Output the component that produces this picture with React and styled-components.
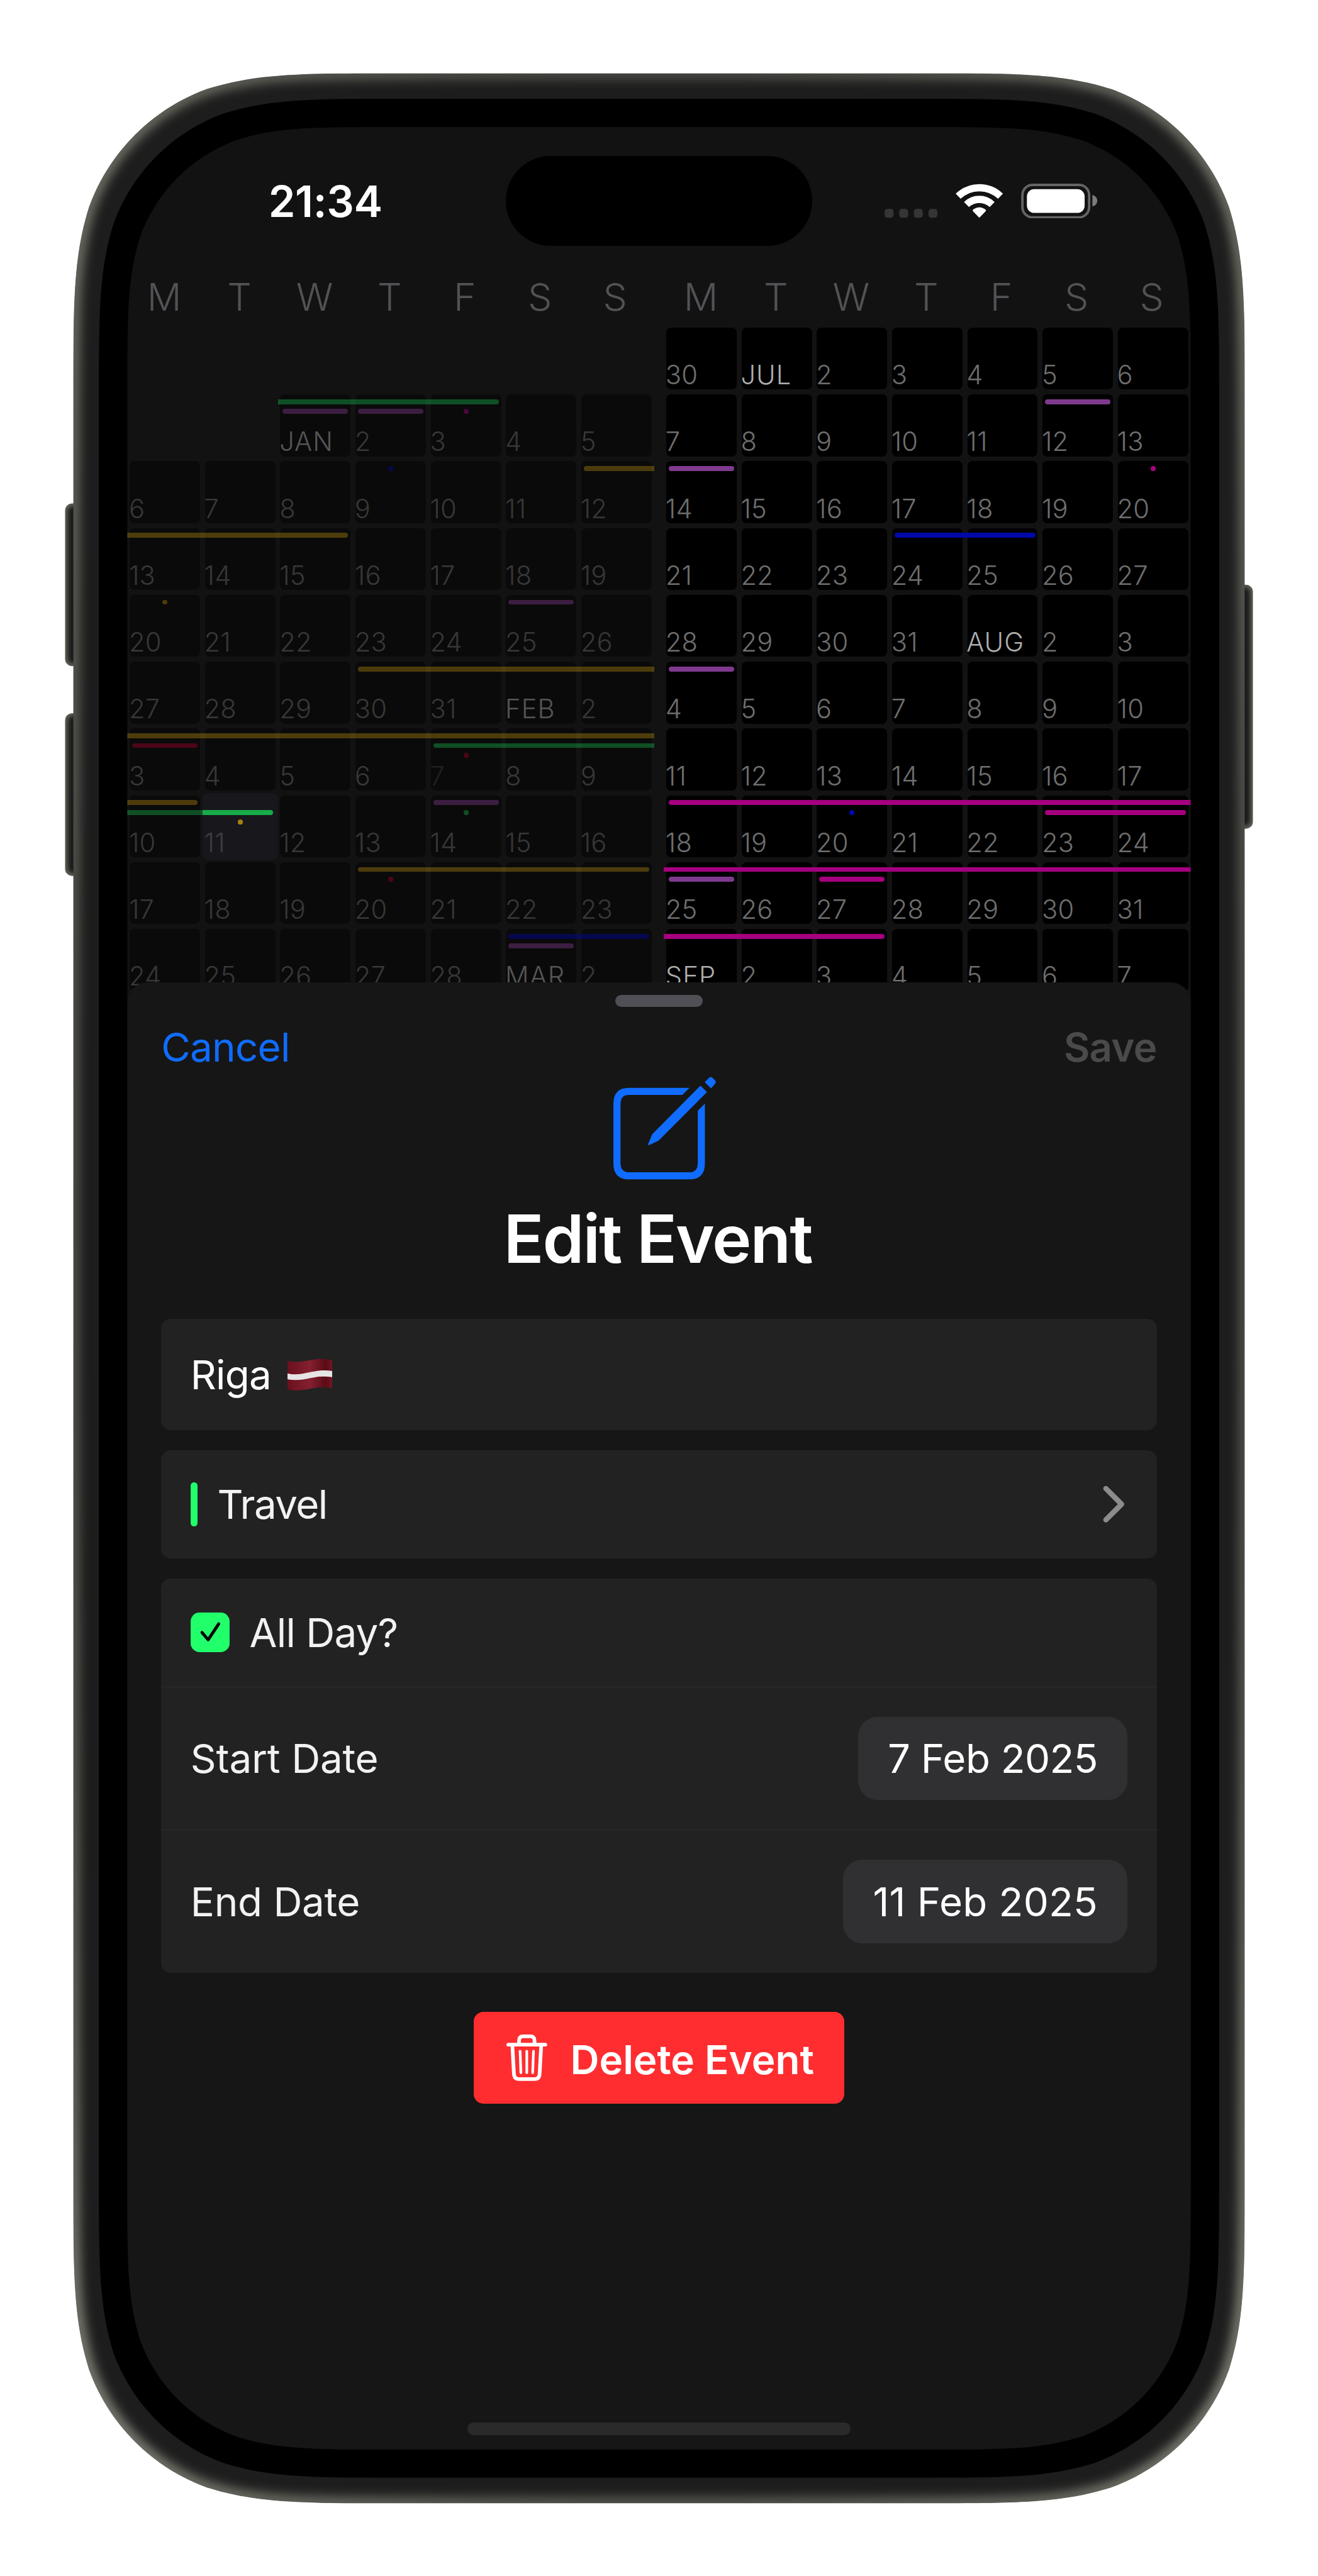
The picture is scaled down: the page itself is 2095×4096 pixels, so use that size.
import React from "react";
import styled, { createGlobalStyle, css } from "styled-components";

/* One rem is 100 design units; the whole design is 32.4rem wide. */
const UNIT = 2095 / 32.4;

const GlobalStyle = createGlobalStyle`
  html {
    font-size: ${UNIT}px;
    background: #ffffff;
  }
  body {
    margin: 0;
    overflow: hidden;
    font-family: Inter, "Liberation Sans", sans-serif;
    -webkit-font-smoothing: antialiased;
  }
  *, *::before, *::after {
    box-sizing: border-box;
  }
`;

/* Rounded rectangle with continuous ("squircle") corners. */
function squircle(x, y, w, h, r) {
  const R = x + w;
  const B = y + h;
  const a = 1.528665 * r;
  const b = 1.088493 * r;
  const c = 0.868407 * r;
  const d = 0.631494 * r;
  const e = 0.074911 * r;
  const f = 0.372824 * r;
  const g = 0.169059 * r;
  return [
    `M${x + a} ${y}`,
    `L${R - a} ${y}`,
    `C${R - b} ${y} ${R - c} ${y} ${R - d} ${y + e}`,
    `C${R - f} ${y + g} ${R - g} ${y + f} ${R - e} ${y + d}`,
    `C${R} ${y + c} ${R} ${y + b} ${R} ${y + a}`,
    `L${R} ${B - a}`,
    `C${R} ${B - b} ${R} ${B - c} ${R - e} ${B - d}`,
    `C${R - g} ${B - f} ${R - f} ${B - g} ${R - d} ${B - e}`,
    `C${R - c} ${B} ${R - b} ${B} ${R - a} ${B}`,
    `L${x + a} ${B}`,
    `C${x + b} ${B} ${x + c} ${B} ${x + d} ${B - e}`,
    `C${x + f} ${B - g} ${x + g} ${B - f} ${x + e} ${B - d}`,
    `C${x} ${B - c} ${x} ${B - b} ${x} ${B - a}`,
    `L${x} ${y + a}`,
    `C${x} ${y + b} ${x} ${y + c} ${x + e} ${y + d}`,
    `C${x + g} ${y + f} ${x + f} ${y + g} ${x + d} ${y + e}`,
    `C${x + c} ${y} ${x + b} ${y} ${x + a} ${y}`,
    "Z",
  ].join(" ");
}

const k = UNIT / 100;
const screenClip = squircle(0, 0, 2614 * k, 5711 * k, 425 * k);

/* ---------- Device ---------- */

const Stage = styled.main`
  position: relative;
  width: 32.4rem;
  height: 63.35rem;
  padding: 3.125rem 3.13rem;
`;

const DeviceArt = styled.svg`
  position: absolute;
  inset: 0;
  width: 32.4rem;
  height: 63.36rem;
`;

const Screen = styled.section`
  position: relative;
  display: flex;
  flex-direction: column;
  width: 26.14rem;
  height: 57.11rem;
  overflow: hidden;
  background: #121212;
  clip-path: path("${screenClip}");
`;

/* ---------- Status bar ---------- */

const StatusBar = styled.header`
  display: grid;
  grid-template-columns: 1fr 7.53rem 1fr;
  align-items: center;
  flex: none;
  height: 2.92rem;
  padding-top: 0.71rem;
`;

const Time = styled.time`
  padding: 0.05rem 0 0 3.47rem;
  font-size: 1.06rem;
  font-weight: 600;
  line-height: 1;
  letter-spacing: -0.005em;
  color: #ffffff;
`;

const Island = styled.div`
  height: 2.21rem;
  border-radius: 1.105rem;
  background: #000000;
`;

const StatusIcons = styled.div`
  display: flex;
  align-items: center;
  justify-content: flex-end;
  padding-right: 2.29rem;
`;

const StatusArt = styled.svg`
  display: block;
  width: 5.24rem;
  height: 0.86rem;
`;

/* ---------- Calendar ---------- */

const Weekdays = styled.div`
  display: grid;
  grid-template-columns: repeat(2, 1fr);
  column-gap: 0.24rem;
  flex: none;
  height: 1.952rem;
  padding-top: 0.785rem;
`;

const WeekdayHalf = styled.div`
  display: grid;
  grid-template-columns: repeat(7, 1fr);
  padding-right: 0.02rem;
`;

const Weekday = styled.span`
  padding-right: 0.03rem;
  font-size: 0.94rem;
  font-weight: 300;
  line-height: 1;
  text-align: center;
  color: #525256;
`;

const Year = styled.div`
  display: grid;
  grid-template-columns: repeat(2, 1fr);
  column-gap: 0.24rem;
  flex: none;
`;

const Half = styled.div`
  display: grid;
  grid-template-rows: repeat(10, 1.643rem);
`;

const Week = styled.div`
  display: grid;
  grid-template-columns: repeat(7, minmax(0, 1fr));
  grid-template-rows: 0.18rem 0.24rem 0.24rem 0.24rem 1fr;
`;

const Day = styled.div`
  grid-row: 1 / -1;
  grid-column: ${(p) => p.$col + 1};
  display: flex;
  align-items: flex-end;
  margin: 0.06rem;
  padding: 0 0 0.025rem;
  border-radius: 0.12rem;
  font-size: 0.645rem;
  font-weight: ${(p) => (p.$month ? 350 : 300)};
  line-height: 1;
  letter-spacing: ${(p) => (p.$month ? "0.025em" : "0.005em")};
  text-indent: -0.02rem;
  white-space: nowrap;
  background: ${(p) => (p.$past ? "#0a0a0a" : "#000000")};
  color: ${(p) =>
    p.$past ? (p.$month ? "#555555" : "#373737") : p.$month ? "#adadad" : "#6e6e6e"};

  ${(p) =>
    p.$today &&
    css`
      margin: 0;
      padding: 0 0 0.085rem 0.06rem;
      background: #18181c;
      color: #3c3c3f;
    `}

  ${(p) =>
    p.$faint &&
    css`
      color: #202020;
    `}
`;

const hues = {
  green: "#17ac48",
  purple: "#7f3a8f",
  pink: "#a5007f",
  yellow: "#a8800f",
  blue: "#0008a8",
  red: "#a50028",
};

const Span = styled.div`
  grid-row: ${(p) => p.$lane + 2};
  grid-column: ${(p) => p.$from + 1} / ${(p) => p.$to + 2};
  height: 0.12rem;
  margin-left: ${(p) => (p.$openStart ? 0 : "0.12rem")};
  margin-right: ${(p) => (p.$openEnd ? 0 : "0.12rem")};
  border-radius: ${(p) =>
    `${p.$openStart ? 0 : "0.06rem"} ${p.$openEnd ? 0 : "0.06rem"} ${
      p.$openEnd ? 0 : "0.06rem"
    } ${p.$openStart ? 0 : "0.06rem"}`};
  background: ${(p) => hues[p.$hue]};
  opacity: ${(p) => (p.$dim ? 0.43 : 1)};
`;

const Dot = styled.div`
  grid-row: ${(p) => p.$lane + 2};
  grid-column: ${(p) => p.$from + 1};
  justify-self: center;
  width: 0.12rem;
  height: 0.12rem;
  border-radius: 50%;
  background: ${(p) => hues[p.$hue]};
  opacity: ${(p) => (p.$dim ? 0.43 : 1)};
`;

/* ---------- Sheet ---------- */

const Sheet = styled.section`
  position: absolute;
  top: 21.035rem;
  right: 0;
  bottom: 0;
  left: 0;
  display: flex;
  flex-direction: column;
  align-items: center;
  padding: 0.3rem 0.834rem 0.355rem;
  border-radius: 0.5rem 0.5rem 0 0;
  background: #161616;
`;

const Grabber = styled.div`
  flex: none;
  width: 2.16rem;
  height: 0.3rem;
  border-radius: 0.15rem;
  background: #504f55;
`;

const SheetNav = styled.nav`
  display: flex;
  align-items: center;
  justify-content: space-between;
  flex: none;
  width: 100%;
  height: 1.72rem;
  padding-top: 0.26rem;
`;

const NavButton = styled.button`
  padding: 0;
  border: 0;
  background: none;
  font: ${(p) => (p.$strong ? 600 : 400)} 0.985rem / 1 Inter, "Liberation Sans", sans-serif;
  letter-spacing: -0.012em;
  color: ${(p) => (p.$strong ? "#4a4a4a" : "#106cff")};
`;

const EditIcon = styled.svg`
  flex: none;
  width: 2.53rem;
  height: 2.53rem;
  margin-left: 0.29rem;
`;

const Title = styled.h1`
  margin: 0.64rem 0 1.145rem;
  padding-right: 0.06rem;
  font-size: 1.635rem;
  font-weight: 600;
  line-height: 1;
  letter-spacing: -0.019em;
  color: #ffffff;
`;

const Form = styled.div`
  display: flex;
  flex-direction: column;
  gap: 0.487rem;
  width: 100%;
`;

const Card = styled.div`
  overflow: hidden;
  border-radius: 0.24rem;
  background: #222222;
`;

const Row = styled.div`
  display: flex;
  align-items: center;
  height: ${(p) => p.$height};
  padding: 0 0.72rem;
  font-size: 0.985rem;
  line-height: 1;
  letter-spacing: ${(p) => p.$track || "-0.012em"};
  color: ${(p) => (p.$bright ? "#ffffff" : "#f2f2f2")};

  & + & {
    border-top: 0.02rem solid #2d2d2f;
  }
`;

const Flag = styled.svg`
  width: 1.1rem;
  height: 0.8rem;
  margin-left: 0.4rem;
`;

const CategoryMark = styled.i`
  width: 0.18rem;
  height: 1.08rem;
  margin-right: 0.48rem;
  border-radius: 0.08rem;
  background: #21ff6b;
`;

const Chevron = styled.svg`
  width: 0.54rem;
  height: 0.92rem;
  margin-left: auto;
  margin-right: 0.07rem;
`;

const Checkbox = styled.span`
  display: flex;
  width: 0.96rem;
  height: 0.96rem;
  margin-right: 0.49rem;
  border-radius: 0.22rem;
  background: #21ff6b;

  svg {
    width: 100%;
    height: 100%;
  }
`;

const DatePill = styled.span`
  display: flex;
  align-items: center;
  height: 2.05rem;
  margin-left: auto;
  padding: 0 0.73rem;
  border-radius: 0.48rem;
  background: #303032;
  color: #ffffff;
  letter-spacing: ${(p) => p.$track};
`;

const DeleteButton = styled.button`
  display: flex;
  align-items: center;
  flex: none;
  width: 9.1rem;
  height: 2.26rem;
  margin-top: 0.96rem;
  padding: 0 0.8rem;
  border: 0;
  border-radius: 0.24rem;
  background: #ff2d30;
  font: 600 0.985rem / 1 Inter, "Liberation Sans", sans-serif;
  letter-spacing: 0;
  white-space: nowrap;
  color: #ffffff;
`;

const DeleteLabel = styled.span`
  padding-top: 0.08rem;
`;

const TrashIcon = styled.svg`
  flex: none;
  width: 1rem;
  height: 1.14rem;
  margin-right: 0.57rem;
`;

const HomeIndicator = styled.div`
  flex: none;
  width: 9.42rem;
  height: 0.3rem;
  margin-top: auto;
  border-radius: 0.15rem;
  background: #2a2a2a;
`;

/* ---------- Data ---------- */

const weekdayNames = ["M", "T", "W", "T", "F", "S", "S"];

const firstHalf = [
  [],
  [null, null, "JAN", 2, 3, 4, 5],
  [6, 7, 8, 9, 10, 11, 12],
  [13, 14, 15, 16, 17, 18, 19],
  [20, 21, 22, 23, 24, 25, 26],
  [27, 28, 29, 30, 31, "FEB", 2],
  [3, 4, 5, 6, 7, 8, 9],
  [10, 11, 12, 13, 14, 15, 16],
  [17, 18, 19, 20, 21, 22, 23],
  [24, 25, 26, 27, 28, "MAR", 2],
];

const secondHalf = [
  [30, "JUL", 2, 3, 4, 5, 6],
  [7, 8, 9, 10, 11, 12, 13],
  [14, 15, 16, 17, 18, 19, 20],
  [21, 22, 23, 24, 25, 26, 27],
  [28, 29, 30, 31, "AUG", 2, 3],
  [4, 5, 6, 7, 8, 9, 10],
  [11, 12, 13, 14, 15, 16, 17],
  [18, 19, 20, 21, 22, 23, 24],
  [25, 26, 27, 28, 29, 30, 31],
  ["SEP", 2, 3, 4, 5, 6, 7],
];

const bar = (hue, lane, from, to = from, ends = "()") => ({
  hue,
  lane,
  from,
  to,
  openStart: ends[0] === "<",
  openEnd: ends[1] === ">",
});
const dot = (hue, lane, from) => ({ dot: true, hue, lane, from });
const lit = (event) => ({ ...event, lit: true });

const firstEvents = {
  1: [bar("green", 0, 2, 4, "<)"), bar("purple", 1, 2), bar("purple", 1, 3), dot("pink", 1, 4)],
  2: [dot("blue", 0, 3), bar("yellow", 0, 6, 6, "(>")],
  3: [bar("yellow", 0, 0, 2, "<)")],
  4: [dot("yellow", 0, 0), bar("purple", 0, 5)],
  5: [bar("yellow", 0, 3, 6, "(>")],
  6: [
    bar("yellow", 0, 0, 6, "<>"),
    bar("red", 1, 0),
    bar("green", 1, 4, 6, "(>"),
    dot("red", 2, 4),
  ],
  7: [
    bar("yellow", 0, 0, 0, "<)"),
    bar("green", 1, 0, 0, "<>"),
    lit(bar("green", 1, 1, 1, "<)")),
    lit(dot("yellow", 2, 1)),
    bar("purple", 0, 4),
    dot("green", 1, 4),
  ],
  8: [bar("yellow", 0, 3, 6), dot("red", 1, 3)],
  9: [bar("blue", 0, 5, 6), bar("purple", 1, 5)],
};

const secondEvents = {
  1: [bar("purple", 0, 5)],
  2: [bar("purple", 0, 0), dot("pink", 0, 6)],
  3: [bar("blue", 0, 3, 4)],
  5: [bar("purple", 0, 0)],
  7: [bar("pink", 0, 0, 6, "(>"), dot("blue", 1, 2), bar("pink", 1, 5, 6)],
  8: [bar("pink", 0, 0, 6, "<>"), bar("purple", 1, 0), bar("pink", 1, 2)],
  9: [bar("pink", 0, 0, 2, "<)")],
};

/* ---------- Components ---------- */

function HalfYear({ weeks, events, past }) {
  return (
    <Half>
      {weeks.map((days, w) => (
        <Week key={w}>
          {days.map((day, col) =>
            day === null ? null : (
              <Day
                key={col}
                $col={col}
                $past={past}
                $month={typeof day === "string"}
                $today={past && w === 7 && col === 1}
                $faint={past && w === 6 && col === 4}
              >
                {day}
              </Day>
            )
          )}
          {(events[w] || []).map((e, i) => {
            const Mark = e.dot ? Dot : Span;
            return (
              <Mark
                key={`e${i}`}
                $hue={e.hue}
                $lane={e.lane}
                $from={e.from}
                $to={e.to}
                $openStart={e.openStart}
                $openEnd={e.openEnd}
                $dim={past && !e.lit}
              />
            );
          })}
        </Week>
      ))}
    </Half>
  );
}

const sideKeys = [
  { id: "action", x: 160, y: 1238, height: 400 },
  { id: "volume", x: 160, y: 1754, height: 400 },
  { id: "power", x: 3040, y: 1438, height: 600 },
];

function Device() {
  const body = squircle(180, 180, 2880, 5976, 520);
  return (
    <DeviceArt viewBox="0 0 3240 6336" aria-hidden="true">
      <defs>
        <filter id="soft" x="-10%" y="-10%" width="120%" height="120%">
          <feGaussianBlur stdDeviation="14" />
        </filter>
        <filter id="softSmall" x="-100%" y="-10%" width="300%" height="120%">
          <feGaussianBlur stdDeviation="6" />
        </filter>
        <radialGradient id="rim" cx="0.5" cy="0.47" r="0.7">
          <stop offset="0.67" stopColor="#4e4f49" />
          <stop offset="0.9" stopColor="#787a6e" />
          <stop offset="0.97" stopColor="#8a8c80" />
        </radialGradient>
        <clipPath id="bodyClip">
          <path d={body} />
        </clipPath>
        {sideKeys.map((s) => (
          <clipPath id={s.id} key={s.id}>
            <rect x={s.x} y={s.y} width="40" height={s.height} rx="18" />
          </clipPath>
        ))}
      </defs>
      {sideKeys.map((s) => (
        <g key={s.id} clipPath={`url(#${s.id})`}>
          <rect x={s.x} y={s.y} width="40" height={s.height} fill="#1c1c1c" />
          <rect
            x={s.x}
            y={s.y}
            width="40"
            height={s.height}
            rx="18"
            fill="none"
            stroke="#77786c"
            strokeWidth="10"
            filter="url(#softSmall)"
          />
        </g>
      ))}
      <g clipPath="url(#bodyClip)">
        <path d={body} fill="#1d1d1d" />
        <path d={body} fill="none" stroke="url(#rim)" strokeWidth="28" filter="url(#soft)" />
      </g>
      <path d={squircle(243, 243, 2754, 5850, 485)} fill="#000000" />
    </DeviceArt>
  );
}

function StatusGlyphs() {
  return (
    <StatusArt viewBox="2174 450 524 86" aria-hidden="true">
      {[2174, 2210, 2246, 2282].map((x) => (
        <rect key={x} x={x} y="512" width="22" height="22" rx="7" fill="#353535" />
      ))}
      <g fill="none" stroke="#ffffff" strokeWidth="17.5">
        <path d="M2355 481 A75 75 0 0 1 2459 481" />
        <path d="M2375.5 501.5 A45 45 0 0 1 2438.500 501.5" />
      </g>
      <path d="M2407 534 L2391.500 518 Q2389.500 515.500 2392 513.500 Q2407 502.500 2422 513.500 Q2424.500 515.500 2422.500 518 Z" fill="#ffffff" />
      <rect x="2513" y="453" width="164" height="80" rx="25" fill="none" stroke="#656565" strokeWidth="6" />
      <rect x="2524" y="463.500" width="142" height="58.500" rx="18" fill="#ffffff" />
      <path d="M2685 478 C2701 482 2701 502 2685 506 Z" fill="#7a7a7a" />
    </StatusArt>
  );
}

export default function App() {
  return (
    <>
      <GlobalStyle />
      <Stage>
        <Device />
        <Screen>
          <StatusBar>
            <Time>21:34</Time>
            <Island />
            <StatusIcons>
              <StatusGlyphs />
            </StatusIcons>
          </StatusBar>
          <Weekdays>
            {[0, 1].map((half) => (
              <WeekdayHalf key={half}>
                {weekdayNames.map((name, i) => (
                  <Weekday key={i}>{name}</Weekday>
                ))}
              </WeekdayHalf>
            ))}
          </Weekdays>
          <Year>
            <HalfYear weeks={firstHalf} events={firstEvents} past />
            <HalfYear weeks={secondHalf} events={secondEvents} />
          </Year>

          <Sheet>
            <Grabber />
            <SheetNav>
              <NavButton>Cancel</NavButton>
              <NavButton $strong>Save</NavButton>
            </SheetNav>
            <EditIcon viewBox="0 0 253 253" aria-hidden="true" fill="#106cff">
              <path d="M187 27.500 H38 Q0 27.500 0 67 V213 Q0 252.500 38 252.500 H187 Q225 252.500 225 213 V66 L207.500 84 V212 Q207.500 235 188 235 H38 Q17.500 235 17.500 212 V68 Q17.500 45 38 45 H169.500 Z" />
              <path d="M214 22 L230 38 L111 157.500 L88 168.200 Q84.500 169 85.500 165.500 L95.500 141.500 Z" />
              <path d="M224.500 13.500 L235 3 Q239.500 -1.500 244 3 L249.500 8.500 Q254 13 249.500 18 L240 28.500 Z" />
            </EditIcon>
            <Title>Edit Event</Title>
            <Form>
              <Card>
                <Row $height="2.743rem" $bright>
                  Riga
                  <Flag viewBox="0 0 110 80" aria-label="Flag of Latvia">
                    <defs>
                      <linearGradient id="cloth" x1="0" x2="1" y1="0" y2="0">
                        <stop offset="0" stopColor="#6b101d" />
                        <stop offset="0.5" stopColor="#84202f" />
                        <stop offset="0.85" stopColor="#5c0a17" />
                        <stop offset="1" stopColor="#741623" />
                      </linearGradient>
                    </defs>
                    <path
                      d="M0 9 Q1 6 4 6.500 C32 13 55 1 85 1 Q100 1 107 4 Q110 5 110 8 V71 Q109 74 105 73 C75 66 55 78 24 78.500 Q8 79 3 76 Q0 75 0 72 Z"
                      fill="url(#cloth)"
                    />
                    <path
                      d="M0 37 C20 41 36 38 56 33.500 C76 29 94 28 110 31 V46 C94 43 76 44 56 48.500 C36 53 20 55 0 51 Z"
                      fill="#e6e4e4"
                    />
                  </Flag>
                </Row>
              </Card>
              <Card>
                <Row $height="2.665rem" $track="-0.024em">
                  <CategoryMark />
                  Travel
                  <Chevron viewBox="0 0 54 92" fill="none" stroke="#8c8c8c" strokeWidth="13" strokeLinecap="round" strokeLinejoin="round">
                    <path d="M7.500 7.500 L46 46 L7.500 84.500" />
                  </Chevron>
                </Row>
              </Card>
              <Card>
                <Row $height="2.66rem">
                  <Checkbox>
                    <svg viewBox="0 0 96 96" fill="none" stroke="#000000" strokeWidth="7.500" strokeLinecap="round" strokeLinejoin="round">
                      <path d="M28 49 L43 67 L69 28" />
                    </svg>
                  </Checkbox>
                  All Day?
                </Row>
                <Row $height="3.52rem" $track="-0.003em">
                  Start Date
                  <DatePill $track="-0.009em">7 Feb 2025</DatePill>
                </Row>
                <Row $height="3.52rem" $track="-0.005em">
                  End Date
                  <DatePill $track="0.003em">11 Feb 2025</DatePill>
                </Row>
              </Card>
            </Form>
            <DeleteButton>
              <TrashIcon viewBox="0 0 100 114" fill="none" stroke="#ffffff" strokeWidth="9" strokeLinecap="round" strokeLinejoin="round">
                <path d="M4.500 25 H95.500" />
                <path d="M31 24 V15 Q31 4.500 41 4.500 H59 Q69 4.500 69 15 V24" />
                <path d="M14.500 26 L18.500 98 Q19.500 109.500 30 109.500 H70 Q80.500 109.500 81.500 98 L85.500 26" />
                <path d="M33.500 41 L35.500 94 M50 41 V94 M66.500 41 L64.500 94" strokeWidth="6.500" />
              </TrashIcon>
              <DeleteLabel>Delete Event</DeleteLabel>
            </DeleteButton>
            <HomeIndicator />
          </Sheet>
        </Screen>
      </Stage>
    </>
  );
}
